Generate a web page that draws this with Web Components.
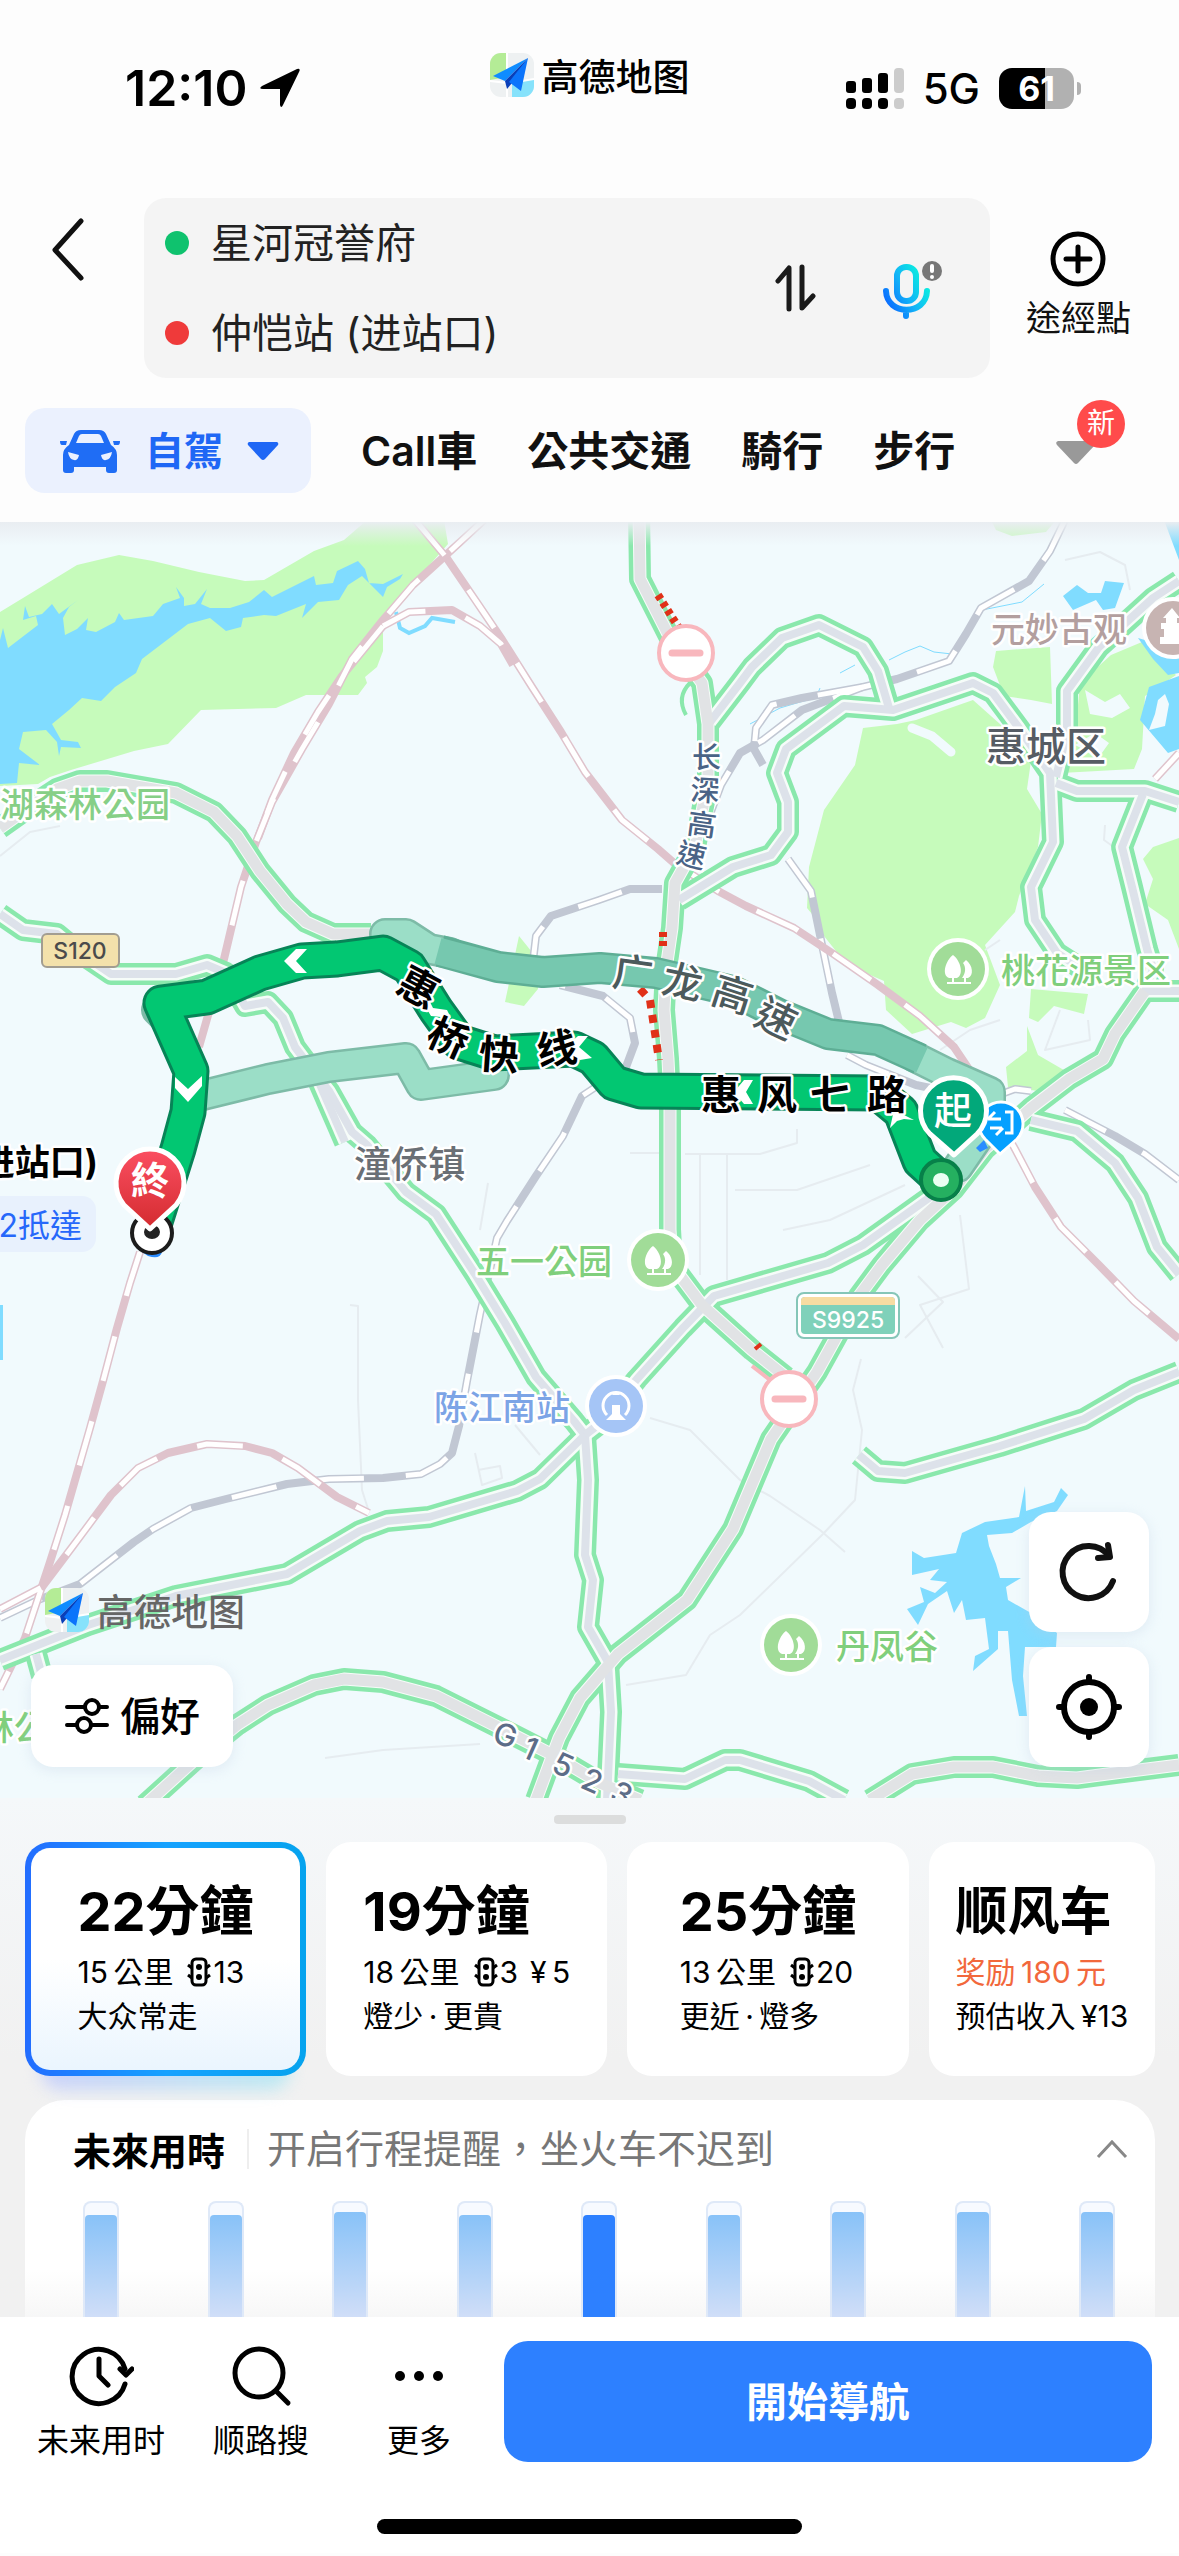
<!DOCTYPE html>
<html lang="zh-Hant">
<head>
<meta charset="utf-8">
<meta name="viewport" content="width=device-width, initial-scale=1">
<title>高德地图</title>
<style>
  * { box-sizing: border-box; }

  body {
    margin: 0;
    background: #fdfdfd;
    color: #111;
    font-family: Inter, "Noto Sans CJK TC", "Noto Sans CJK SC", sans-serif;
    --color-primary: #2d80ff;
    --color-accent: #1f67f5;
  }
</style>
</head>
<body>
<route-page></route-page>

<script>
const baseStyle = `
  *, *::before, *::after { box-sizing: border-box; }
  button { font: inherit; color: inherit; background: none; border: 0; padding: 0; margin: 0; cursor: pointer; }
  svg { display: block; flex: none; }
`;

// Small base class: every element renders one html string into its shadow root
class BaseElement extends HTMLElement {
  constructor() {
    super();
    this.attachShadow({ mode: 'open' });
  }

  connectedCallback() {
    this.shadowRoot.innerHTML = `<style>${baseStyle}</style>${this.render()}`;
  }
}

class AppLogo extends BaseElement {
  render() {
    return `
      <style>
        :host { display: flex; align-items: center; gap: 8px; font: 500 37px/44px "Noto Sans CJK SC", sans-serif; }
      </style>
      <svg width="44" height="44" viewBox="0 0 44 44">
        <defs><clipPath id="r"><rect width="44" height="44" rx="11"/></clipPath></defs>
        <g clip-path="url(#r)">
          <rect width="44" height="44" fill="#eef1f2"/>
          <path d="M0 0h17v24L0 27z" fill="#b4ec96"/>
          <path d="M22 30l22-4v18H22z" fill="#86e2fb"/>
          <path d="M17 0v20M0 28l17 2v14M44 26l-12 2" stroke="#fff" stroke-width="2" fill="none"/>
        </g>
        <path d="M38 5L3 23l12 5z" fill="#0f8cff"/>
        <path d="M38 5L15 28l2 8 5-6z" fill="#0a3fb8"/>
        <path d="M38 5L19 29l12 9z" fill="#0b74fb"/>
      </svg>
      <span>高德地图</span>
    `;
  }
}

class StatusBar extends BaseElement {
  render() {
    return `
      <style>
        :host { display: grid; grid-template-columns: 1fr auto 1fr; height: 198px; padding: 0 98px; color: #000; }
        .left, .right { display: flex; align-items: center; height: 176px; }
        .time { font-size: 50px; font-weight: 600; }
        .left { gap: 12px; padding-left: 27px; }
        .right { justify-content: flex-end; gap: 19px; }
        .net { font-size: 42px; font-weight: 500; }
        app-logo { height: 44px; margin-top: 53px; }
        .battery { display: flex; align-items: center; gap: 3px; }
        .level {
          width: 75px; height: 41px; border-radius: 13px; color: #fff; text-align: center;
          font-size: 34px; line-height: 41px; font-weight: 700;
          background: linear-gradient(90deg, #000 61%, #b1b1b1 61%);
        }
        .nub { width: 4px; height: 13px; border-radius: 0 6px 6px 0; background: #b1b1b1; }
      </style>
      <div class="left">
        <span class="time">12:10</span>
        <svg width="42" height="40" viewBox="0 0 42 40"><path d="M38 1Q42 0 40 4L24 37q-2 4-3 0V21H4q-5 0-1-3z" fill="#000"/></svg>
      </div>
      <app-logo></app-logo>
      <div class="right">
        <svg width="58" height="41" viewBox="0 0 58 41">
          <g fill="#000">
            <rect y="13" width="10" height="12" rx="3"/><rect y="30" width="10" height="11" rx="4"/>
            <rect x="16" y="10" width="10" height="15" rx="3"/><rect x="16" y="30" width="10" height="11" rx="4"/>
            <rect x="32" y="5" width="10" height="20" rx="3"/><rect x="32" y="30" width="10" height="11" rx="4"/>
          </g>
          <g fill="#ccc"><rect x="48" width="10" height="25" rx="4"/><rect x="48" y="30" width="10" height="11" rx="4"/></g>
        </svg>
        <span class="net">5G</span>
        <div class="battery"><span class="level">61</span><span class="nub"></span></div>
      </div>
    `;
  }
}

class RouteSearch extends BaseElement {
  render() {
    return `
      <style>
        :host { display: flex; align-items: stretch; padding: 0 48px 0 44px; }
        .back { width: 100px; padding: 14px 0 0 0; display: flex; align-items: flex-start; }
        .box { flex: 1; display: flex; align-items: center; min-height: 180px; border-radius: 22px; background: #f4f4f4; padding: 0 46px 0 21px; }
        .stops { flex: 1; display: flex; flex-direction: column; }
        .stop { display: flex; align-items: center; gap: 22px; height: 90px; font-size: 41px; text-align: left; color: #222; }
        .stop i { width: 24px; height: 24px; border-radius: 50%; background: #0fc26e; }
        .stop.to i { background: #ef3a3a; }
        ::slotted(span) { padding-bottom: 6px; }
        .swap { margin-right: 64px; }
        .via { display: flex; flex-direction: column; align-items: center; gap: 11px; margin: 33px 0 0 36px; font-size: 35px; line-height: 40px; align-self: flex-start; }
      </style>
      <button class="back" aria-label="返回">
        <svg width="44" height="76" viewBox="0 0 44 76"><path d="M37 9L11 38l26 28" fill="none" stroke="#111" stroke-width="5" stroke-linecap="round" stroke-linejoin="round"/></svg>
      </button>
      <div class="box">
        <div class="stops">
          <button class="stop"><i></i><slot name="from"></slot></button>
          <button class="stop to"><i></i><slot name="to"></slot></button>
        </div>
        <button class="swap" aria-label="交換">
          <svg width="42" height="48" viewBox="0 0 42 48"><path d="M4 17L15 4v41M28 3v41L39 32" fill="none" stroke="#1a1a1a" stroke-width="5" stroke-linecap="round" stroke-linejoin="round"/></svg>
        </button>
        <button aria-label="語音">
          <svg width="64" height="66" viewBox="0 0 64 66">
            <defs><linearGradient id="m" gradientUnits="userSpaceOnUse" x1="6" y1="48" x2="46" y2="26"><stop offset="0" stop-color="#0a6cff"/><stop offset=".5" stop-color="#12b4f7"/><stop offset="1" stop-color="#09efdf"/></linearGradient></defs>
            <g fill="none" stroke="url(#m)" stroke-width="6" stroke-linecap="round">
              <rect x="17" y="12" width="19" height="34" rx="9"/>
              <path d="M6 36c1 25 40 25 41 0M26 56v5"/>
            </g>
            <circle cx="52" cy="16" r="10" fill="#777"/>
            <path d="M52 11v5" stroke="#fff" stroke-width="4" stroke-linecap="round"/><circle cx="52" cy="22" r="2" fill="#fff"/>
          </svg>
        </button>
      </div>
      <button class="via">
        <svg width="56" height="56" viewBox="0 0 56 56"><g fill="none" stroke="#000" stroke-width="5" stroke-linecap="round"><circle cx="28" cy="28" r="25"/><path d="M28 16v24M16 28h24"/></g></svg>
        <span>途經點</span>
      </button>
    `;
  }
}

class ModeTabs extends BaseElement {
  render() {
    return `
      <style>
        :host { display: flex; align-items: center; gap: 50px; padding: 30px 54px 29px 25px; font-size: 41px; font-weight: 600; color: #111; }
        button { height: 85px; white-space: nowrap; padding-bottom: 6px; }
        .active {
          display: flex; align-items: center; gap: 24px; padding: 0 32px 0 34px; border-radius: 20px;
          color: var(--color-accent); background: #ebf1fe; font-size: 39px;
        }
        .active span { padding-bottom: 6px; }
        .more { position: relative; margin-left: auto; width: 70px; }
        .more svg { margin: 10px 0 0 0; }
        .badge {
          position: absolute; right: 0; top: -8px; width: 48px; height: 48px; border-radius: 50%;
          background: #ff4b4b; color: #fff; font-size: 28px; line-height: 46px; font-weight: 400;
        }
      </style>
      <button class="active">
        <svg width="62" height="44" viewBox="0 0 62 44">
          <path d="M10 16L15 5Q17 1 22 1h18q5 0 7 4l5 11q6 4 6 10v15q0 3-3 3h-5q-3 0-3-3v-3H15v3q0 3-3 3H7q-3 0-3-3V26q0-6 6-10z" fill="#1f6df5"/>
          <path d="M17 14L20 7q1-2 3-2h16q2 0 3 2l3 7z" fill="#ebf1fe"/>
          <path d="M9 23l11 3q-1 6-5 5-5-1-6-8zM53 23l-11 3q1 6 5 5 5-1 6-8z" fill="#ebf1fe"/>
          <path d="M1 12h7l-1 4H3q-2 0-2-4zM61 12h-7l1 4h4q2 0 2-4z" fill="#1f6df5"/>
        </svg>
        <span>自駕</span>
        <svg width="32" height="20" viewBox="0 0 32 20"><path d="M2 1h28q2 1 1 3L18 18q-2 2-4 0L1 4Q0 2 2 1z" fill="#1f67f5"/></svg>
      </button>
      <button>Call車</button>
      <button>公共交通</button>
      <button>騎行</button>
      <button>步行</button>
      <button class="more" aria-label="更多方式">
        <svg width="42" height="26" viewBox="0 0 42 26"><path d="M3 1h36q3 1 1 4L23 23q-2 2-4 0L2 5Q0 2 3 1z" fill="#999"/></svg>
        <span class="badge">新</span>
      </button>
    `;
  }
}

// Map geometry, in the units of the map's own viewBox
const parks = [
  '0,612 23,598 77,565 119,555 153,561 199,572 245,581 264,580 314,551 344,540 367,520 444,520 448,544 405,593 383,626 383,651 377,667 365,677 367,683 358,695 306,695 276,708 201,710 168,744 134,751 71,770 50,777 38,784 0,786',
  '863,728 897,724 916,720 973,700 1000,724 1031,761 1027,789 1042,814 1038,847 1019,896 1015,912 985,945 1000,985 985,1018 966,1028 951,1022 912,1034 886,1010 884,981 847,965 824,936 817,920 807,908 809,867 824,810 855,765',
  '996,651 1050,647 1052,704 1031,700 1004,696 993,667',
  '1111,655 1142,642 1176,675 1145,696 1142,749 1134,769 1061,773 1077,716 1080,683',
  '991,520 1056,520 1046,532 1012,536 996,530',
  '1179,838 1153,847 1143,859 1153,879 1145,904 1168,920 1179,949',
  '1031,989 1088,994 1084,1014 1054,1006 1038,1022 1029,1018',
  '1027,1026 1038,1055 1069,1073 1038,1091 1008,1087 1006,1067 1027,1051',
  '519,936 536,957 538,989 524,1006 505,1002'
];

const waters = [
  '0,640 3,628 8,648 21,638 38,625 36,616 23,620 25,606 29,617 42,614 52,604 59,614 78,600 69,607 63,618 65,635 77,629 88,618 86,630 96,632 115,622 119,613 124,620 153,616 163,604 180,598 176,587 184,598 184,606 195,604 207,589 201,604 210,608 230,608 249,602 264,590 272,597 314,576 316,585 333,583 337,571 358,561 365,569 369,583 383,584 403,574 400,579 387,587 383,597 379,593 362,576 348,585 339,600 318,602 302,618 306,604 276,616 264,615 243,618 241,627 226,631 210,618 188,624 142,659 136,673 115,687 101,701 82,698 69,710 52,724 61,740 78,742 81,748 61,747 59,756 57,742 46,730 23,732 19,749 40,765 19,763 17,783 0,784',
  '1063,596 1077,585 1088,593 1101,593 1105,581 1124,583 1115,608 1103,610 1096,600 1073,610',
  '1164,520 1179,520 1179,560',
  '1138,638 1179,650 1179,673 1168,675 1153,659',
  '1179,676 1149,687 1140,720 1157,740 1168,753 1179,749',
  '1025,1486 1026,1511 1054,1502 1061,1488 1068,1495 1057,1511 1031,1522 1012,1533 987,1535 989,1546 996,1564 1000,1578 1021,1578 1006,1587 1008,1600 1031,1613 1057,1633 1056,1647 1025,1647 1023,1676 1027,1716 1019,1716 1012,1680 1008,1631 998,1631 998,1649 973,1671 975,1656 989,1649 985,1618 966,1620 962,1600 954,1613 947,1591 928,1604 918,1625 907,1609 924,1602 920,1587 935,1593 947,1582 930,1580 939,1569 912,1575 912,1551 924,1558 956,1553 962,1533 985,1522 1019,1517',
  '0,1305 3,1305 3,1360 0,1360'
];

const lanes = [
  '630,1153 660,1153', '685,1154 760,1154 797,1143 797,1129', '700,1154 700,1275', '735,1190 797,1190 870,1165',
  '783,1230 830,1220 905,1185', '727,1154 727,1280', '350,1305 358,1306 358,1400 362,1490 369,1512', '960,1215 969,1289 920,1305 943,1348',
  '918,1276 943,1302 905,1338', '650,1418 690,1430 740,1480 770,1496 820,1530 845,1552', '861,1359 853,1390 862,1430 855,1500 823,1534',
  '823,1534 740,1615 710,1635 686,1675 626,1685', '488,1183 480,1230', '515,1425 540,1455', '475,1453 482,1485 502,1478 500,1466 478,1470',
  '325,1758 383,1750 480,1744', '1065,560 1100,552 1125,565 1130,590', '1105,825 1104,840 1118,850', '1000,940 985,950',
  '1060,1010 1045,1050 1090,1040 1088,1020', '0,856 30,832 60,826', '940,1050 970,1030 1000,1020'
];

const pinkRails = [
  '415,520 446,557 478,604 501,638 532,687 561,732 585,772 622,820 658,849 674,863 718,891 746,906 794,928 832,953 878,985 920,1016 954,1047 981,1087 1015,1149 1035,1187 1061,1227 1099,1265 1134,1301 1179,1339',
  '484,520 446,555 413,585 383,620 352,659 329,704 302,749 272,802 256,842 241,887 224,959 199,1047',
  '383,626 342,676 318,712 294,753 272,800 258,838',
  '383,626 409,612 452,610 480,626 501,644 513,665',
  '140,1252 130,1283 117,1328 103,1381 90,1428 65,1515 50,1562 25,1638 0,1689',
  '0,1609 42,1587 73,1546 111,1495 138,1468 168,1453 207,1444 245,1446 272,1453 298,1468 337,1497 369,1513',
  '1155,779 1179,753'
];

const grayRails = [
  '0,1618 38,1600 80,1584 134,1542 153,1529 191,1508 226,1499 287,1484 329,1479 383,1478 421,1474 440,1464 452,1453 459,1426 467,1381 480,1314 497,1238 507,1221 536,1176 563,1136 582,1096 626,1067 635,1043 630,1018 603,996 560,985',
  '532,970 536,936 551,916 599,900 630,889 662,889',
  '1065,520 1050,551 1029,581 981,608 966,634 949,661 897,679 863,687 802,710 763,740 740,753 721,785 704,830',
  '863,687 802,698 772,705 756,728 754,749 763,765',
  '788,859 811,891 821,940 832,993 840,1026',
  '847,1055 866,1065 916,1085 940,1090', '996,1096 1015,1089 1031,1091',
  '1065,1110 1115,1136 1145,1154 1179,1180'
];

const roads = [
  '0,914 23,930 57,934 80,953 111,974 176,974 207,965 226,973 245,1006 268,1002 283,1018 295,1047 310,1067 329,1091 352,1132 367,1145 406,1192 436,1214 475,1274 505,1323 536,1377 574,1421 585,1435',
  '318,1080 345,1142',
  '585,1435 540,1479 517,1491 429,1517 387,1521 360,1531 287,1574 176,1596 88,1625 0,1660',
  '36,1654 42,1676',
  '585,1435 588,1480 585,1555 593,1580 588,1627 608,1662 611,1712 607,1800',
  '1031,1120 1077,1131 1115,1163 1138,1198 1157,1247 1179,1274',
  '940,1190 863,1245 828,1263 714,1296 683,1328 637,1379 603,1421 585,1435',
  '710,722 740,683 752,667 782,638 819,625 863,647 878,671 889,708',
  '679,900 733,867 771,855 788,832 788,802 777,773 786,749 844,706 893,710 973,683 993,693 1019,728 1050,773 1053,842 1031,887 1035,920 1057,953 1088,973',
  '1179,581 1153,598 1099,647 1067,691 1067,732 1056,777',
  '1056,783 1077,791 1145,791 1179,802',
  '1143,794 1122,847 1132,887 1147,949 1153,969 1145,991 1179,991',
  '859,1455 878,1471 905,1473 1000,1446 1084,1419 1134,1390 1179,1372',
  '618,1774 685,1779 725,1760 740,1760 809,1781 844,1800'
];

const highways = [
  '0,828 31,806 57,789 80,781 107,781 176,793 214,812 237,836 260,871 287,904 306,922 333,934 371,934',
  '639,510 640,579 672,642 702,683 708,724 708,781 695,847 675,883 672,928 666,969 664,1010 668,1059 670,1100 670,1229 672,1265 702,1305 752,1350 786,1377',
  '1145,991 1115,1034 1103,1059 1069,1079 1031,1108 985,1149 954,1189 920,1220 882,1265 859,1296 817,1372 771,1439 733,1529 687,1600 618,1654 580,1698 559,1738 536,1800',
  '145,1805 200,1755 237,1725 268,1705 314,1685 344,1679 383,1682 436,1696 498,1727 551,1754 600,1783 640,1800',
  '870,1800 912,1774 954,1767 993,1767 1038,1776 1077,1778 1115,1773 1179,1765'
];

const mainRoute = '153,1228 178,1149 188,1112 191,1071 161,1003 207,997 260,973 302,961 337,959 383,953 409,967 436,1010 459,1042 494,1053 574,1049 593,1058 614,1083 641,1091 878,1093 901,1112 920,1161 941,1180';

// [text, x, y centre, size, colour, weight]
const labels = [
  ['湖森林公园', 0, 804, 34, '#86cf86', 500],
  ['元妙古观', 991, 629, 34, '#b39f9f', 500],
  ['惠城区', 986, 746, 40, '#565c64', 500],
  ['桃花源景区', 1001, 970, 34, '#80cf7c', 500],
  ['潼侨镇', 354, 1164, 37, '#6a6f75', 500],
  ['五一公园', 476, 1261, 34, '#80cf7c', 500],
  ['陈江南站', 434, 1407, 34, '#7ca4e6', 500],
  ['丹凤谷', 836, 1646, 34, '#80cf7c', 500],
  ['林公', -20, 1727, 34, '#80cf7c', 500]
];

// Road names that bend: size, colour, weight, then [x centre, y centre, angle] per glyph
const bentLabels = [
  ['惠桥快线', 40, '#000', 600, [[419, 987, 28], [448, 1038, 24], [499, 1055, 4], [557, 1049, -8]]],
  ['惠风七路', 40, '#000', 600, [[721, 1094, 0], [777, 1094, 0], [830, 1094, 0], [887, 1094, 0]]],
  ['广龙高速', 40, '#4c5a5c', 500, [[633, 973, 8], [683, 982, 12], [733, 994, 18], [776, 1018, 26]]],
  ['长深高速', 29, '#4a6386', 500, [[706, 757, 0], [705, 790, 3], [702, 824, 8], [692, 855, 14]]],
  ['G1523', 31, '#5d6d88', 500, [[504, 1734, 18], [534, 1750, 24], [564, 1765, 24], [593, 1781, 24], [622, 1794, 28]]]
];

const lines = (list, cls) => list.map(p => `<polyline class="${cls}" points="${p}"/>`).join('');
const areas = (list, fill) => list.map(p => `<polygon points="${p}" fill="${fill}"/>`).join('');

function bentLabel([text, size, color, weight, glyphs]) {
  const xs = [], ys = [], rot = [];
  [...text].forEach((ch, i) => {
    const [cx, cy, deg] = glyphs[i];
    const a = deg * Math.PI / 180;
    const hw = /[A-Z0-9]/.test(ch) ? size * 0.33 : size / 2;
    const hh = size * 0.37;
    xs.push(Math.round(cx - hw * Math.cos(a) - hh * Math.sin(a)));
    ys.push(Math.round(cy - hw * Math.sin(a) + hh * Math.cos(a)));
    rot.push(deg);
  });
  return `<text x="${xs}" y="${ys}" rotate="${rot}" font-size="${size}" font-weight="${weight}" fill="${color}">${text}</text>`;
}

const treePoi = (x, y) => `
  <g transform="translate(${x} ${y})">
    <circle r="31" fill="#fff"/><circle r="27" fill="#a1dc98"/>
    <path d="M-5-14C3-8 6 6-1 9h-3v4h-2V9h-3C-17 6-12-9-5-14z" fill="#fff"/>
    <path d="M8-9c7 5 8 16 2 18H8v4H6V9H4c4-5 4-11 1-15z" fill="#fff"/>
    <path d="M-11 13h24v2h-24z" fill="#fff"/>
  </g>`;

const noEntry = (x, y) => `
  <circle cx="${x}" cy="${y}" r="27" fill="#fff" stroke="#f8b7bd" stroke-width="4"/>
  <path d="M${x - 14} ${y}h28" stroke="#f8b7bd" stroke-width="7" stroke-linecap="round"/>`;

class MapView extends BaseElement {
  render() {
    return `
      <style>
        :host { display: block; position: relative; overflow: hidden; background: #f1fafd; }
        .map { width: 100%; height: auto; font-family: Inter, "Noto Sans CJK SC", sans-serif; }
        .shade { position: absolute; inset: 0 0 auto 0; height: 24px; background: linear-gradient(#e9edf1, #e9edf100); }
        polyline { fill: none; stroke-linejoin: round; }
        .lane { stroke: #e6ecf0; stroke-width: 2; }
        .edge { stroke: #8ae8ac; stroke-width: 22; }
        .gap { stroke: #f6fcf9; stroke-width: 13; }
        .core { stroke: #dde2ea; stroke-width: 8; }
        .wide { stroke: #e1e3e5; stroke-width: 11; }
        .pink { stroke: #dfc3cc; stroke-width: 8; }
        .gray { stroke: #c1c7d3; stroke-width: 8; }
        .dash { stroke: #fff; stroke-width: 5; stroke-dasharray: 46 42; }
        .alt-edge { stroke: #7dbba7; stroke-width: 32; stroke-linecap: round; }
        .alt { stroke: #9bdec7; stroke-width: 27; stroke-linecap: round; }
        .alt-dark-edge { stroke: #5eae95; stroke-width: 32; }
        .alt-dark { stroke: #76c8af; stroke-width: 27; }
        .main-edge { stroke: #078457; stroke-width: 37; }
        .main { stroke: #02c772; stroke-width: 31; }
        .jam { stroke: #e03018; stroke-width: 8; stroke-dasharray: 5 4; }
        .jam.long { stroke-dasharray: 8 7; }
        .chev { fill: #fff; }
        .halo text { paint-order: stroke; stroke: #fff; stroke-width: 5; stroke-linejoin: round; }
        .logo { position: absolute; left: 45px; bottom: 166px; color: #666; }
        .prefs { position: absolute; left: 31px; bottom: 31px; }
        .tools { position: absolute; right: 30px; bottom: 31px; display: flex; flex-direction: column; gap: 15px; }
      </style>
      <svg class="map" viewBox="0 522 1179 1276" preserveAspectRatio="xMidYMid slice">
        <defs>
          <linearGradient id="red" x1="0" y1="0" x2="0" y2="1"><stop offset="0" stop-color="#fb4f62"/><stop offset="1" stop-color="#d32b2f"/></linearGradient>
        </defs>
        <rect y="522" width="1179" height="1276" fill="#f1fafd"/>
        ${areas(parks, '#c6fbbb')}
        ${areas(waters, '#80dcff')}
        <path d="M1158 700l7-6 4 10-4 22-16 4 6-16z" fill="#f1fafd"/>
        <path d="M912 728l20 8 19 16" stroke="#f1fafd" stroke-width="9" fill="none" stroke-linecap="round"/>
        <path d="M1085 690l20 12 15-8 10 14-18 10-22-4zM1075 745l20-12 14 10-10 14z" fill="#f1fafd"/>
        <g fill="none" stroke="#80dcff">
          <path d="M396 612l4 16 9 5 16-7 7-8 23 4" stroke-width="4"/>
          <path d="M1044 584l-22 18-40 8-20 24M952 654l-18-2-14-6-15 6-16 8M855 665l-15 8M820 688l-4 10-16 4-20 6-30 16"/>
        </g>
        ${lines(lanes, 'lane')}
        ${lines(grayRails, 'gray')}${lines(grayRails, 'dash')}
        ${lines(pinkRails, 'pink')}${lines(pinkRails, 'dash')}
        ${lines([...roads, ...highways], 'edge')}
        ${lines([...roads, ...highways], 'gap')}
        ${lines(roads, 'core')}
        ${lines(highways, 'wide')}
        <path d="M686 715q-10-18 4-32" fill="none" stroke="#8ae8ac" stroke-width="4"/>
        <polyline class="jam" points="658,595 679,628"/>
        <polyline class="jam" points="663,932 663,946"/>
        <polyline class="jam long" points="640,989 650,1000 659,1060"/>
        <path d="M755 1349l6-5" stroke="#e03018" stroke-width="4"/>
        <path d="M752 1366l18 14" stroke="#f8b7bd" stroke-width="4"/>

        <polyline class="alt-edge" points="385,934 406,934 429,949 450,953"/>
        <polyline class="alt-edge" points="915,1057 947,1073 990,1092 990,1120 958,1167"/>
        <polyline class="alt-edge" points="191,1098 268,1079 329,1067 406,1058 421,1085 494,1075"/>
        <polyline class="alt-edge" points="157,1010 165,1018"/>
        <polyline class="alt" points="385,934 406,934 429,949 450,953"/>
        <polyline class="alt" points="915,1057 947,1073 990,1092 990,1120 958,1167"/>
        <polyline class="alt" points="191,1098 268,1079 329,1067 406,1058 421,1085 494,1075"/>
        <polyline class="alt-dark-edge" points="440,951 498,967 543,972 600,968 656,973 733,991 779,1014 828,1034 878,1040 920,1059"/>
        <polyline class="alt-dark" points="438,951 498,967 543,972 600,968 656,973 733,991 779,1014 828,1034 878,1040 922,1060"/>
        <polyline class="main-edge" points="${mainRoute}"/>
        <polyline class="main" points="${mainRoute}"/>
        <g class="chev">
          <path d="M296 949h11l-11 12 11 12h-11l-12-12z"/>
          <path d="M175 1077l13 12 14-13v10l-14 16-13-14z"/>
          <path d="M429 1000l4 8 14 2 4 8-20-2-6-10z"/>
          <path d="M578 1036h10l-9 11 13 11-12 2-15-13z"/>
          <path d="M744 1080h9l-7 12 7 12h-9l-10-12z"/>
          <path d="M890 1128l4-18 20 10-10-1-7 2z"/>
        </g>

        <g class="halo">
          ${labels.map(([t, x, y, s, c, w]) => `<text x="${x}" y="${Math.round(y + s * 0.37)}" font-size="${s}" font-weight="${w}" fill="${c}">${t}</text>`).join('')}
          ${bentLabels.map(bentLabel).join('')}
        </g>

        ${treePoi(958, 969)}${treePoi(658, 1260)}${treePoi(791, 1645)}
        <circle cx="1173" cy="628" r="31" fill="#fff"/><circle cx="1173" cy="628" r="27" fill="#c7b4b2"/>
        <path d="M1172 608l8 10h-3v5h5v6h-3v8h4v7h-23v-7h4v-8h-3v-6h5v-5h-3z" fill="#fff"/>
        <circle cx="616" cy="1406" r="31" fill="#fff"/><circle cx="616" cy="1406" r="27" fill="#a5c5f6"/>
        <path d="M607 1415a13 13 0 1 1 18 0" fill="none" stroke="#fff" stroke-width="3"/>
        <path d="M612 1405h8v9l6 6h-20l6-6zM612 1395l4-4 4 4z" fill="#fff"/>
        ${noEntry(686, 653)}${noEntry(789, 1399)}

        <rect x="42" y="934" width="77" height="33" rx="5" fill="#f3e1ab" stroke="#a29d91" stroke-width="2"/>
        <text x="80" y="959" text-anchor="middle" font-size="23" font-weight="500" fill="#4b4b4b">S120</text>
        <rect x="797" y="1293" width="102" height="45" rx="7" fill="#fff" stroke="#85c6b8" stroke-width="2"/>
        <rect x="801" y="1297" width="94" height="37" rx="4" fill="#7fd1ba"/>
        <path d="M801 1305v-4q0-4 4-4h86q4 0 4 4v4z" fill="#f7dca2"/>
        <text x="848" y="1328" text-anchor="middle" font-size="23" font-weight="500" fill="#fff">S9925</text>

        <path d="M976 1148l8-8 4 8-8 4zM142 1252h20q-2 8-14 4z" fill="#2b8cff"/>
        <path d="M1000 1154l-15-15a22 22 0 1 1 32 0z" fill="#05a0ff" stroke="#fff" stroke-width="3"/>
        <path d="M988 1119h13M995 1112l-7 7M990 1128h12M996 1135l7-7M1005 1112h7v21h-7" fill="none" stroke="#fff" stroke-width="3"/>
        <circle cx="941" cy="1180" r="20" fill="#25b060" stroke="#078049" stroke-width="4"/>
        <ellipse cx="941" cy="1180" rx="8" ry="7" fill="#eafff2"/>
        <path d="M954 1155l-24-21a33 33 0 1 1 47 0z" fill="#02a87a" stroke="#fff" stroke-width="5" stroke-linejoin="round"/>
        <text x="953" y="1124" text-anchor="middle" font-size="38" font-weight="500" fill="#fff">起</text>

        <circle cx="152" cy="1233" r="20" fill="#fff" stroke="#1c1c1c" stroke-width="4"/>
        <ellipse cx="152" cy="1232" rx="8" ry="7" fill="#222"/>
        <path d="M150 1229l-26-24a34 34 0 1 1 52 0z" fill="url(#red)" stroke="#fff" stroke-width="5" stroke-linejoin="round"/>
        <text x="150" y="1194" text-anchor="middle" font-size="38" font-weight="600" fill="#fff" style="font-family: 'Noto Sans CJK TC', sans-serif">終</text>
        <rect x="-40" y="1196" width="136" height="56" rx="14" fill="#e8f1fd"/>
        <g class="halo"><text x="98" y="1175" text-anchor="end" font-size="35" font-weight="700" fill="#000">进站口)</text></g>
        <text x="82" y="1237" text-anchor="end" font-size="32" fill="#2668fa" style="font-family: Inter, 'Noto Sans CJK TC', sans-serif">2抵達</text>
      </svg>
      <div class="shade"></div>
      <app-logo class="logo"></app-logo>
      <map-button class="prefs">
        <svg width="46" height="40" viewBox="0 0 46 40"><g fill="none" stroke="#000" stroke-width="4" stroke-linecap="round"><path d="M3 11h17M36 11h7M3 29h10M27 29h16"/><circle cx="28" cy="11" r="7"/><circle cx="20" cy="29" r="7"/></g></svg>
        <span>偏好</span>
      </map-button>
      <div class="tools">
        <map-button label="重新整理">
          <svg width="66" height="66" viewBox="0 0 66 66"><g fill="none" stroke="#111" stroke-width="6" stroke-linecap="round" stroke-linejoin="round"><path d="M57 42A26 26 0 1 1 53 17"/><path d="M52 6l2 12-12 1"/></g></svg>
        </map-button>
        <map-button label="定位">
          <svg width="66" height="66" viewBox="0 0 66 66"><g fill="none" stroke="#000" stroke-width="6" stroke-linecap="round"><circle cx="33" cy="33" r="25"/><path d="M33 3v4M33 59v4M3 33h4M59 33h4"/></g><circle cx="33" cy="33" r="9" fill="#000"/></svg>
        </map-button>
      </div>
    `;
  }
}

class MapButton extends BaseElement {
  render() {
    const label = this.getAttribute('label');
    return `
      <style>
        :host { display: block; }
        button {
          display: flex; align-items: center; justify-content: center; gap: 10px; width: 100%; min-width: 120px; min-height: 102px;
          padding: 0 33px; border-radius: 22px; background: #fff; box-shadow: 0 3px 14px #b9cbe055; font-size: 40px; font-weight: 500; color: #000;
        }
        :host([label]) button { height: 120px; padding: 0; }
        ::slotted(span) { padding-bottom: 4px; }
      </style>
      <button ${label ? `aria-label="${label}"` : ''}><slot></slot></button>
    `;
  }
}

const lightIcon = `<svg class="light" width="24" height="30" viewBox="0 0 24 30"><rect x="5" y="2" width="14" height="26" rx="4" fill="none" stroke="#000" stroke-width="3"/><path d="M1 8l4 3M1 18l4 3M23 8l-4 3M23 18l-4 3" stroke="#000" stroke-width="3"/><circle cx="12" cy="10" r="3"/><circle cx="12" cy="20" r="3"/></svg>`;

class RouteCard extends BaseElement {
  render() {
    const dist = this.getAttribute('distance');
    const lights = this.getAttribute('lights');
    const toll = this.getAttribute('toll');
    const info = dist
      ? `<span>${dist}</span>${lightIcon}<span>${lights}</span>${toll ? `<span class="toll">${toll}</span>` : ''}`
      : `<span>${this.getAttribute('bonus')}</span>`;
    return `
      <style>
        :host { display: block; flex: 282 1 0; }
        :host([narrow]) { flex-grow: 227; }
        button {
          position: relative; display: flex; justify-content: center; width: 100%; min-height: 234px; padding: 40px 0 30px;
          border-radius: 25px; background: #fff; color: #000; text-align: left; white-space: nowrap;
        }
        :host([selected]) button {
          border: 6px solid transparent; padding: 34px 0 24px;
          background: linear-gradient(#fff 50%, #eaf5fe) padding-box, linear-gradient(90deg, #236dff, #16a2ff 50%, #06a3ee) border-box;
        }
        :host([selected]) button::after {
          content: ""; position: absolute; z-index: -1; inset: auto 10px -20px 10px; height: 40px; border-radius: 20px;
          background: linear-gradient(90deg, #cbd2f9, #bde9f2); filter: blur(8px);
        }
        :host([selected]) { position: relative; z-index: 0; }
        .title { display: block; margin-bottom: 8px; font-size: 54px; line-height: 60px; font-weight: 700; }
        :host([narrow]) .title { font-size: 52px; }
        .info, .note { display: flex; align-items: center; font-size: 30px; line-height: 44px; }
        .light { margin: 0 2px 0 14px; }
        .toll { margin-left: 12px; }
        .bonus { color: #f2683c; }
      </style>
      <button>
        <span>
          <span class="title"><slot></slot></span>
          <span class="info ${dist ? '' : 'bonus'}">${info}</span>
          <span class="note">${this.getAttribute('note')}</span>
        </span>
      </button>
    `;
  }
}

class FutureTimes extends BaseElement {
  render() {
    const bars = this.getAttribute('bars').split(',');
    return `
      <style>
        :host { display: block; overflow: hidden; border-radius: 40px 40px 0 0; background: #fff; }
        header { display: flex; align-items: center; height: 101px; padding: 0 27px 4px 48px; }
        h2 { margin: 0; font-size: 38px; font-weight: 700; color: #000; }
        p { flex: 1; margin: 0 0 0 22px; padding-left: 18px; font-size: 39px; line-height: 40px; color: #777; border-left: 2px solid #eee; }
        .chart { display: flex; justify-content: space-between; height: 116px; padding: 0 40px 0 58px; background: linear-gradient(#fff 60%, #f7f7f7); }
        .bar { width: 36px; padding-top: 12px; border: 2px solid #dfe9f8; border-bottom: 0; border-radius: 8px 8px 0 0; background: #f7faff; }
        .bar i { display: block; height: 100%; border-radius: 4px 4px 0 0; background: linear-gradient(#88c2f8, #d0def8); }
        .bar.high { padding-top: 9px; }
        .bar.now i { background: var(--color-primary); }
      </style>
      <header>
        <h2><slot></slot></h2>
        <p><slot name="tip"></slot></p>
        <button aria-label="收起"><svg width="32" height="20" viewBox="0 0 32 20"><path d="M2 18L16 3l14 15" fill="none" stroke="#888" stroke-width="3"/></svg></button>
      </header>
      <div class="chart">${bars.map(b => `<span class="bar ${b}"><i></i></span>`).join('')}</div>
    `;
  }
}

class ToolButton extends BaseElement {
  render() {
    return `
      <style>
        :host { display: block; }
        button { display: flex; flex-direction: column; align-items: center; gap: 14px; font-size: 32px; line-height: 40px; color: #000; white-space: nowrap; }
      </style>
      <button><slot name="icon"></slot><span><slot></slot></span></button>
    `;
  }
}

class ActionBar extends BaseElement {
  render() {
    return `
      <style>
        :host { display: block; background: #fff; }
        .row { display: flex; align-items: flex-start; padding: 24px 27px 0 37px; }
        .tools { display: flex; gap: 48px; padding-top: 4px; width: 467px; }
        tool-button:last-child { margin-left: 30px; }
        .start { flex: 1; height: 121px; padding-bottom: 6px; border-radius: 24px; background: var(--color-primary); color: #fff; font-size: 41px; font-weight: 600; }
        .home { width: 36%; height: 15px; margin: 57px auto 19px; border-radius: 8px; background: #000; }
      </style>
      <div class="row">
        <div class="tools">
          <tool-button>
            <svg slot="icon" width="66" height="62" viewBox="0 0 66 62"><g fill="none" stroke="#000" stroke-width="5" stroke-linecap="round" stroke-linejoin="round"><path d="M57 39A27 27 0 1 1 57 24"/><path d="M31 14v17l9 9M52 24l6 6 6-6"/></g></svg>
            未来用时
          </tool-button>
          <tool-button>
            <svg slot="icon" width="62" height="62" viewBox="0 0 62 62"><g fill="none" stroke="#000" stroke-width="5" stroke-linecap="round"><circle cx="29" cy="28" r="24"/><path d="M46 46l12 12"/></g></svg>
            顺路搜
          </tool-button>
          <tool-button>
            <svg slot="icon" width="62" height="62" viewBox="0 0 62 62"><circle cx="12" cy="31" r="5"/><circle cx="31" cy="31" r="5"/><circle cx="50" cy="31" r="5"/></svg>
            更多
          </tool-button>
        </div>
        <button class="start">開始導航</button>
      </div>
      <div class="home"></div>
    `;
  }
}

class RoutePage extends BaseElement {
  render() {
    return `
      <style>
        :host { display: flex; flex-direction: column; min-height: 100vh; }
        .sheet { padding: 17px 24px 0 25px; background: linear-gradient(#f5f8fa, #f1f1f1 50%); }
        .handle { width: 72px; height: 9px; margin: 0 auto 18px; border-radius: 4px; background: #dcdddd; }
        .cards { display: flex; gap: 20px; margin-bottom: 24px; }
      </style>
      <status-bar></status-bar>
      <route-search>
        <span slot="from">星河冠誉府</span>
        <span slot="to">仲恺站 (进站口)</span>
      </route-search>
      <mode-tabs></mode-tabs>
      <map-view></map-view>
      <section class="sheet">
        <div class="handle"></div>
        <div class="cards">
          <route-card selected distance="15&thinsp;公里" lights="13" note="大众常走">22分鐘</route-card>
          <route-card distance="18&thinsp;公里" lights="3" toll="¥&thinsp;5" note="燈少&thinsp;·&thinsp;更貴">19分鐘</route-card>
          <route-card distance="13&thinsp;公里" lights="20" note="更近&thinsp;·&thinsp;燈多">25分鐘</route-card>
          <route-card narrow bonus="奖励&thinsp;180&thinsp;元" note="预估收入&thinsp;¥13">顺风车</route-card>
        </div>
        <future-times bars="low,low,high,low,now,low,high,high,high">未來用時<span slot="tip">开启行程提醒，坐火车不迟到</span></future-times>
      </section>
      <action-bar></action-bar>
    `;
  }
}

customElements.define('app-logo', AppLogo);
customElements.define('status-bar', StatusBar);
customElements.define('route-search', RouteSearch);
customElements.define('mode-tabs', ModeTabs);
customElements.define('map-button', MapButton);
customElements.define('map-view', MapView);
customElements.define('route-card', RouteCard);
customElements.define('future-times', FutureTimes);
customElements.define('tool-button', ToolButton);
customElements.define('action-bar', ActionBar);
customElements.define('route-page', RoutePage);
</script>
</body>
</html>
